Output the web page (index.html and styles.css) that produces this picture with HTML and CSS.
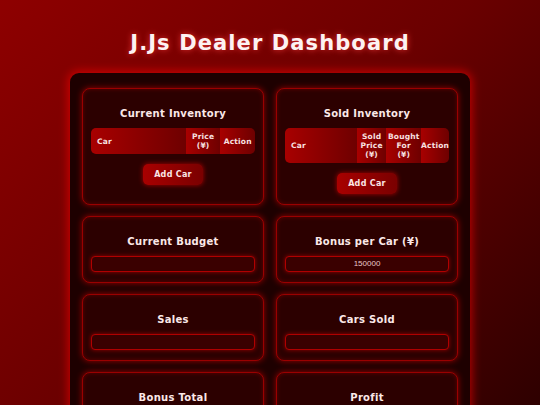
FILE: index.html
```html
<!DOCTYPE html>
<html>
<head>
<meta charset="utf-8">
<link rel="stylesheet" href="styles.css">
</head>
<body>
<h1 class="title">J.Js Dealer Dashboard</h1>
<div class="container">
  <div class="grid">
    <div class="card">
      <h3>Current Inventory</h3>
      <table class="tbl">
        <tr><th class="left c-car1">Car</th><th class="c-price">Price<br>(¥)</th><th class="c-act1">Action</th></tr>
      </table>
      <button class="btn">Add Car</button>
    </div>
    <div class="card">
      <h3>Sold Inventory</h3>
      <table class="tbl">
        <tr><th class="left c-car2">Car</th><th class="c-sold">Sold<br>Price<br>(¥)</th><th class="c-bought">Bought<br>For<br>(¥)</th><th class="c-act2">Action</th></tr>
      </table>
      <button class="btn">Add Car</button>
    </div>
    <div class="card">
      <h3>Current Budget</h3>
      <div class="field"></div>
    </div>
    <div class="card">
      <h3>Bonus per Car (¥)</h3>
      <div class="field">150000</div>
    </div>
    <div class="card">
      <h3>Sales</h3>
      <div class="field"></div>
    </div>
    <div class="card">
      <h3>Cars Sold</h3>
      <div class="field"></div>
    </div>
    <div class="card">
      <h3>Bonus Total</h3>
      <div class="field"></div>
    </div>
    <div class="card">
      <h3>Profit</h3>
      <div class="field"></div>
    </div>
  </div>
</div>
</body>
</html>
```
FILE: styles.css
```css
html, body {
  margin: 0;
  padding: 0;
}
body {
  width: 540px;
  height: 405px;
  overflow: hidden;
  background: linear-gradient(135deg, #8e0000 0%, #6a0000 50%, #2e0000 100%);
  font-family: "DejaVu Sans", Verdana, sans-serif;
  color: #fff;
}
.title {
  margin: 0;
  padding-top: 30px;
  height: 43px;
  text-align: center;
  font-size: 21px;
  line-height: 26px;
  font-weight: bold;
  letter-spacing: 1.1px;
  color: #fdf2f2;
  text-shadow: 0 0 6px rgba(255, 60, 60, 0.8);
}
.container {
  width: 376px;
  margin: 0 auto;
  padding: 15px 12px;
  background: #1e0000;
  border-radius: 9px;
  box-shadow: 0 0 10px 2px rgba(255, 0, 0, 0.6);
}
.grid {
  display: grid;
  grid-template-columns: minmax(0, 1fr) minmax(0, 1fr);
  gap: 11px 12px;
}
.card {
  min-width: 0;
  background: #2c0000;
  border: 1px solid #9a0000;
  border-radius: 8px;
  box-shadow: 0 0 6px rgba(255, 0, 0, 0.55), inset 0 0 4px rgba(255, 0, 0, 0.25);
  padding: 10px 8px;
  display: flex;
  flex-direction: column;
  align-items: center;
}
.card h3 {
  margin: 8px 0 8px;
  font-size: 10px;
  line-height: 13px;
  font-weight: bold;
  letter-spacing: 0.3px;
  color: #fbe8e8;
}
.tbl {
  width: 100%;
  table-layout: fixed;
  border-collapse: collapse;
  border-radius: 5px;
  overflow: hidden;
}
.tbl th {
  background: linear-gradient(90deg, #a80000, #6e0000);
  font-size: 7.5px;
  line-height: 9px;
  font-weight: bold;
  letter-spacing: 0.2px;
  color: #f8e0e0;
  padding: 4px 0;
  text-align: center;
}
.tbl th.left {
  text-align: left;
  padding-left: 6px;
}
.c-car1 { width: 54%; }
.c-price { width: 21%; }
.c-act1 { width: 21%; }
.c-car2 { width: 40%; }
.c-sold { width: 18%; }
.c-bought { width: 21%; }
.c-act2 { width: 17%; }
.btn {
  margin-top: 10px;
  margin-bottom: 0;
  height: 21px;
  padding: 0 11px;
  border: none;
  border-radius: 5px;
  background: linear-gradient(90deg, #a80000, #7a0000);
  box-shadow: 0 0 5px rgba(255, 0, 0, 0.6);
  color: #fbe6e6;
  font-family: "DejaVu Sans", Verdana, sans-serif;
  font-size: 8px;
  font-weight: bold;
  letter-spacing: 0.3px;
}
.field {
  box-sizing: border-box;
  width: 100%;
  height: 16px;
  background: #3a0000;
  border: 1px solid #b00000;
  border-radius: 4px;
  box-shadow: 0 0 4px rgba(255, 0, 0, 0.5);
  text-align: center;
  font-family: "Liberation Sans", Arial, sans-serif;
  font-size: 8px;
  line-height: 14px;
  color: #e8c8c8;
}
```
